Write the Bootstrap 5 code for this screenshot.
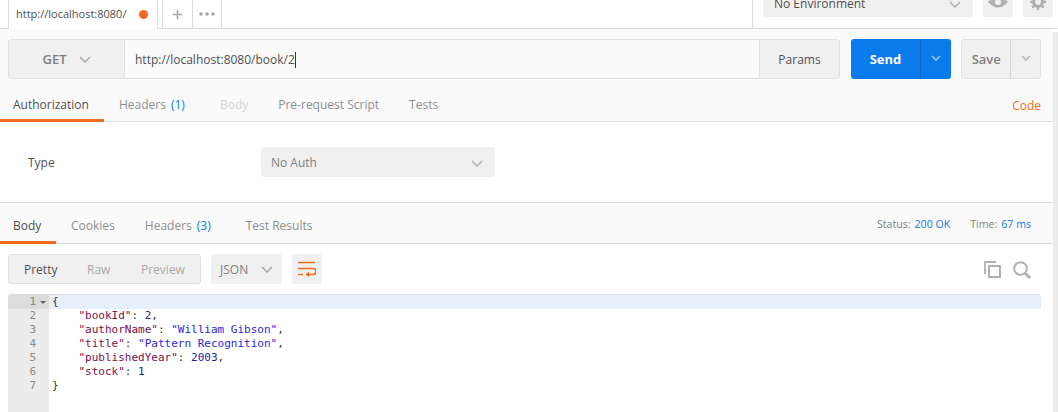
<!DOCTYPE html>
<html lang="en">
<head>
<meta charset="utf-8">
<title>Postman</title>
<link rel="stylesheet" href="https://cdn.jsdelivr.net/npm/bootstrap@5.3.0/dist/css/bootstrap.min.css">
<style>
html,body{height:412px;overflow:hidden;background:#fff}
body{font-family:"Open Sans",sans-serif;font-size:12px;color:#505050}
.shell{height:412px;width:1058px;overflow:hidden}
.main-pane{width:1053px;flex:none;height:412px}
.side-gutter{width:5px;flex:none;background:#fff}
.side-gutter::before{content:"";display:block;height:29px;border-bottom:1px solid #ddd}
.side-gutter i{display:block;margin-top:3px;height:380px;background:#ececec}
.top-strip{height:29px;border-bottom:1px solid #ddd;overflow:visible;background:#fff}
.tab-open{width:150px;height:29px;margin-left:8px;padding:0 9px 0 7px;border-left:1px solid #ddd;border-right:1px solid #ddd;background:#fff;font-size:11px;color:#505050;flex:none}
.dot{width:9px;height:9px;border-radius:50%;background:#f26b21}
.tab-mini{height:28px;border-right:1px solid #ddd;flex:none;color:#a9a9a9}
.tab-plus{width:31px;margin-left:4px;border-left:1px solid #ddd}
.tab-more{width:29px}
.env-zone{margin-left:auto;height:28px;border-left:1px solid #ddd;padding-left:10px;width:301px;overflow:hidden;flex:none}
.env-sel{width:210px;height:26px;margin-top:-9px;background:#f0f0f0;border-radius:3px;padding:0 12px 0 11px;font-size:12px;color:#505050}
.env-btn{width:30px;height:30px;margin-top:-13px;margin-left:10px;background:#f0f0f0;border-radius:3px}
.builder{background:#fafafa;height:93px}
.url-row{padding:10px 12px 0 8px;height:61px;gap:0}
.url-group{height:40px;width:832px;border:1px solid #e1e1e1;border-radius:3px;background:#fafafa;flex:none;overflow:hidden}
.method{width:116px;background:#f0f0f0;border-right:1px solid #e1e1e1;font-weight:600;font-size:13px;color:#808080;gap:12px;flex:none;padding-top:1px}
.url-text{flex:1;padding-left:10px;color:#505050;font-size:12px;padding-top:1px}
.caret{display:inline-block;width:1px;height:16px;background:#333;margin-left:0}
.param-btn{width:80px;background:#f0f0f0;border-left:1px solid #e1e1e1;color:#505050;flex:none;padding-top:2px}
.send-btn{width:100px;height:40px;margin-left:11px;border-radius:3px;background:#097bed;color:#fff;font-weight:700;font-size:13px;flex:none;overflow:hidden}
.send-main{width:69px;padding-top:2px}
.send-arrow{width:31px;border-left:1px solid #0a66c2;padding-bottom:2px}
.save-btn{width:80px;height:40px;margin-left:10px;border-radius:3px;background:#f0f0f0;border:1px solid #e1e1e1;color:#808080;font-weight:600;font-size:13px;flex:none}
.save-main{width:49px;padding-top:2px}
.save-arrow{width:30px;border-left:1px solid #d9d9d9;height:100%;padding-bottom:2px}
.tab-line{height:32px;border-bottom:1px solid #ddd;position:relative}
.tab-line span.tb{display:inline-flex;height:32px;align-items:center;padding-bottom:2px;white-space:nowrap}
.tb{color:#8e8e8e}
.tab-line span.tb-on,.resp-bar span.tb-on{color:#505050;border-bottom:3px solid #f26b21}
.tab-line span.tb-off{color:#d4d4d4}
.req-tabs span.tb-on{width:104px;padding-left:13px;padding-bottom:0}
.req-tabs .t2{margin-left:15px}
.req-tabs .t3{margin-left:35px}
.req-tabs .t4{margin-left:30px}
.req-tabs .t5{margin-left:30px}
.num{color:#097bed;margin-left:5px}
.code-link{margin-left:auto;color:#f26b21;padding-right:12px;align-self:center}
.auth-pane{height:81px;background:#fff;border-bottom:1px solid #ddd;padding:25px 0 0 28px}
.type-label{width:233px;flex:none;line-height:32px}
.auth-sel{width:234px;height:30px;background:#f0f0f0;border-radius:3px;padding:2px 12px 0 10px;color:#808080}
.resp-bar{height:41px;background:#fafafa;border-bottom:1px solid #ddd;position:relative}
.resp-bar span.tb{display:inline-flex;height:41px;align-items:center;padding-top:4px;white-space:nowrap}
.resp-bar span.tb-on{width:56px;padding-left:13px;padding-top:7px}
.resp-bar .r2{margin-left:15px}
.resp-bar .r3{margin-left:30px}
.resp-bar .r4{margin-left:35px}
.stat{margin-left:auto;padding-right:22px;font-size:10.6px;color:#808080;padding-top:4px}
.stat b{font-weight:400;color:#097bed;margin-left:4px}
.stat .lbl2{margin-left:20px}
.tool-row{height:50px;padding:10px 22px 0 8px;background:#fff}
.fmt-group{width:193px;height:30px;background:#f0f0f0;border:1px solid #e1e1e1;border-radius:3px;padding:1px 0 0 15px;flex:none;color:#a9a9a9}
.fmt-group .f1{color:#505050;width:63px}
.fmt-group .f2{width:54px}
.lang-sel{width:71px;height:30px;background:#f0f0f0;border-radius:3px;margin-left:10px;padding:1px 9px 0;color:#808080;flex:none}
.wrap-btn{width:30px;height:30px;background:#f0f0f0;border-radius:3px;margin-left:10px;flex:none}
.tool-right{margin-left:auto;gap:12px;height:30px;padding-top:1px}
.editor{margin:0 12px 0 8px;height:118px;border-top:1px solid #ddd;border-radius:3px 3px 0 0;font-family:"DejaVu Sans Mono",monospace;font-size:11px;line-height:14px;background:#fff;overflow:hidden}
.gutter{width:41px;background:#ececec;color:#888;flex:none}
.gutter div{height:14px;text-align:right;padding-right:13px;position:relative}
.gutter .cur{background:#dcdcdc}
.fold{position:absolute;right:3px;top:6px;width:0;height:0;border-left:3px solid transparent;border-right:3px solid transparent;border-top:3px solid #666}
.lines{flex:1;padding-left:3px;white-space:pre;color:#333}
.lines div{height:14px}
.lines .cur{background:#e6f0fb;margin-left:-3px;padding-left:3px}
.k{color:#7a0f4d}.s{color:#2a1fdc}.n{color:#1a1aa6}
</style>
</head>
<body>
<div class="shell d-flex">
<div class="main-pane">
  <div class="top-strip d-flex">
    <div class="tab-open d-flex align-items-center justify-content-between"><span>http://localhost:8080/</span><span class="dot"></span></div>
    <div class="tab-mini tab-plus d-flex align-items-center justify-content-center">
      <svg width="9" height="9" viewBox="0 0 9 9"><path d="M4.5 0v9M0 4.5h9" stroke="#a9a9a9" stroke-width="1.6"/></svg>
    </div>
    <div class="tab-mini tab-more d-flex align-items-center justify-content-center">
      <svg width="16" height="4" viewBox="0 0 16 4"><circle cx="2" cy="2" r="1.8" fill="#a9a9a9"/><circle cx="8" cy="2" r="1.8" fill="#a9a9a9"/><circle cx="14" cy="2" r="1.8" fill="#a9a9a9"/></svg>
    </div>
    <div class="env-zone d-flex">
      <div class="env-sel d-flex align-items-center justify-content-between"><span>No Environment</span>
        <svg width="12" height="7" viewBox="0 0 12 7"><path d="M1 1l5 5 5-5" fill="none" stroke="#b0b0b0" stroke-width="1.5"/></svg></div>
      <div class="env-btn d-flex align-items-center justify-content-center">
        <svg width="20" height="12" viewBox="0 0 20 12"><path d="M0 6q10-11 20 0q-10 11-20 0z" fill="#b0b0b0"/><circle cx="10" cy="6" r="3" fill="#f0f0f0"/></svg></div>
      <div class="env-btn d-flex align-items-center justify-content-center">
        <svg width="16" height="16" viewBox="0 0 16 16"><circle cx="8" cy="8" r="4.5" fill="none" stroke="#b0b0b0" stroke-width="3"/><path d="M8 0v3M8 13v3M0 8h3M13 8h3M2.3 2.3l2.2 2.2M11.5 11.5l2.2 2.2M13.7 2.3l-2.2 2.2M4.5 11.5l-2.2 2.2" stroke="#b0b0b0" stroke-width="2.4"/></svg></div>
    </div>
  </div>
  <div class="builder">
    <div class="url-row d-flex">
      <div class="url-group d-flex">
        <div class="method d-flex align-items-center justify-content-center"><span>GET</span>
          <svg width="12" height="7" viewBox="0 0 12 7"><path d="M1 1l5 5 5-5" fill="none" stroke="#a9a9a9" stroke-width="1.5"/></svg></div>
        <div class="url-text d-flex align-items-center"><span>http://localhost:8080/book/2</span><span class="caret"></span></div>
        <div class="param-btn d-flex align-items-center justify-content-center">Params</div>
      </div>
      <div class="send-btn d-flex">
        <div class="send-main d-flex align-items-center justify-content-center">Send</div>
        <div class="send-arrow d-flex align-items-center justify-content-center">
          <svg width="10" height="6" viewBox="0 0 10 6"><path d="M1 1l4 4 4-4" fill="none" stroke="#a8cdf5" stroke-width="1.5"/></svg></div>
      </div>
      <div class="save-btn d-flex align-items-center">
        <div class="save-main d-flex align-items-center justify-content-center">Save</div>
        <div class="save-arrow d-flex align-items-center justify-content-center">
          <svg width="10" height="6" viewBox="0 0 10 6"><path d="M1 1l4 4 4-4" fill="none" stroke="#b5b5b5" stroke-width="1.5"/></svg></div>
      </div>
    </div>
    <div class="tab-line req-tabs d-flex">
      <span class="tb tb-on">Authorization</span>
      <span class="tb t2">Headers<span class="num">(1)</span></span>
      <span class="tb tb-off t3">Body</span>
      <span class="tb t4">Pre-request Script</span>
      <span class="tb t5">Tests</span>
      <span class="code-link">Code</span>
    </div>
  </div>
  <div class="auth-pane d-flex align-items-start">
    <div class="type-label">Type</div>
    <div class="auth-sel d-flex align-items-center justify-content-between"><span>No Auth</span>
      <svg width="12" height="7" viewBox="0 0 12 7"><path d="M1 1l5 5 5-5" fill="none" stroke="#b0b0b0" stroke-width="1.5"/></svg></div>
  </div>
  <div class="resp-bar d-flex">
    <span class="tb tb-on">Body</span>
    <span class="tb r2">Cookies</span>
    <span class="tb r3">Headers<span class="num">(3)</span></span>
    <span class="tb r4">Test Results</span>
    <div class="stat d-flex align-items-center"><span>Status:</span><b>200 OK</b><span class="lbl2">Time:</span><b>67 ms</b></div>
  </div>
  <div class="tool-row d-flex">
    <div class="fmt-group d-flex align-items-center"><span class="f1">Pretty</span><span class="f2">Raw</span><span>Preview</span></div>
    <div class="lang-sel d-flex align-items-center justify-content-between"><span>JSON</span>
      <svg width="12" height="7" viewBox="0 0 12 7"><path d="M1 1l5 5 5-5" fill="none" stroke="#a9a9a9" stroke-width="1.5"/></svg></div>
    <div class="wrap-btn d-flex align-items-center justify-content-center">
      <svg width="18" height="16" viewBox="0 0 18 16"><path d="M0 1.5h17M0 7.5h15a2.5 2.5 0 0 1 0 6h-6M0 13.5h5" fill="none" stroke="#f26b21" stroke-width="1.7"/><path d="M11 10.5l-3.5 3 3.5 2.5z" fill="#f26b21"/></svg></div>
    <div class="tool-right d-flex align-items-center">
      <svg width="17" height="17" viewBox="0 0 17 17"><path d="M1 13V1h11" fill="none" stroke="#b0b0b0" stroke-width="1.8"/><path d="M5 5h11v11H5z" fill="none" stroke="#b0b0b0" stroke-width="2"/></svg>
      <svg width="18" height="18" viewBox="0 0 18 18"><circle cx="7.5" cy="7.5" r="6.3" fill="none" stroke="#b0b0b0" stroke-width="2"/><path d="M12 12l5 5" stroke="#b0b0b0" stroke-width="2.8"/></svg>
    </div>
  </div>
  <div class="editor d-flex">
    <div class="gutter">
      <div class="cur">1<span class="fold"></span></div><div>2</div><div>3</div><div>4</div><div>5</div><div>6</div><div>7</div>
    </div>
    <div class="lines"><div class="cur">{</div><div>    <span class="k">"bookId"</span>: <span class="n">2</span>,</div><div>    <span class="k">"authorName"</span>: <span class="s">"William Gibson"</span>,</div><div>    <span class="k">"title"</span>: <span class="s">"Pattern Recognition"</span>,</div><div>    <span class="k">"publishedYear"</span>: <span class="n">2003</span>,</div><div>    <span class="k">"stock"</span>: <span class="n">1</span></div><div>}</div></div>
  </div>
</div>
<div class="side-gutter"><i></i></div>
</div>
<script src="https://cdn.jsdelivr.net/npm/bootstrap@5.3.0/dist/js/bootstrap.bundle.min.js"></script>
</body>
</html>
